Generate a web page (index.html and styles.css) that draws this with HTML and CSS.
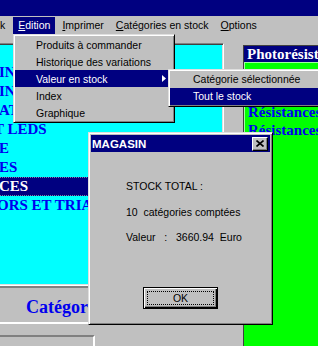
FILE: index.html
```html
<!DOCTYPE html>
<html>
<head>
    <meta charset="utf-8">
    <meta name="viewport" content="width=device-width, initial-scale=1">
    <title>MAGASIN</title>
    <link rel="stylesheet" href="styles.css">
</head>
<body>
    <div class="screen">
        <div class="titlebar"></div>

        <div class="menubar">
            <span class="menu-item first">k</span>
            <span class="menu-item open"><u>E</u>dition</span>
            <span class="menu-item"><u>I</u>mprimer</span>
            <span class="menu-item"><u>C</u>atégories en stock</span>
            <span class="menu-item"><u>O</u>ptions</span>
        </div>

        <div class="workspace">
            <div class="left-col">
                <div class="list-panel">
                    <div class="row">INTERRUPTEURS</div>
                    <div class="row">INVERSEURS</div>
                    <div class="row">ATTENUATEURS</div>
                    <div class="row clip">T LEDS</div>
                    <div class="row">E</div>
                    <div class="row">ES</div>
                    <div class="row selected">CES</div>
                    <div class="row clip-small">ORS ET TRIACS</div>
                </div>
                <div class="caption">Catégories en stock</div>
                <div class="footer-box"></div>
            </div>

            <div class="side-panel">
                <div class="side-head">Photorésistances</div>
                <div class="side-list">
                    <div class="side-row">Potentiomètres</div>
                    <div class="side-row">Relais</div>
                    <div class="side-row">Résistances 1/4 W</div>
                    <div class="side-row">Résistances 1/2 W</div>
                </div>
            </div>
        </div>

        <!-- Edition menu -->
        <div class="dropdown raised">
            <div class="drop-item">Produits à commander</div>
            <div class="drop-item">Historique des variations</div>
            <div class="drop-item active">
                <span>Valeur en stock</span>
                <svg class="arrow" width="4" height="7" viewBox="0 0 4 7"><path d="M0 0 L4 3.5 L0 7 Z" fill="#fff"/></svg>
            </div>
            <div class="drop-item">Index</div>
            <div class="drop-item">Graphique</div>
        </div>

        <div class="submenu raised">
            <div class="sub-item">Catégorie sélectionnée</div>
            <div class="sub-item active">Tout le stock</div>
        </div>

        <!-- result window -->
        <div class="dialog raised">
            <div class="dialog-title">
                <span class="dialog-name">MAGASIN</span>
                <span class="close-btn">
                    <svg width="8" height="7" viewBox="0 0 8 7"><path d="M0.5 0.5 L7.5 6.5 M7.5 0.5 L0.5 6.5" stroke="#000" stroke-width="1.6"/></svg>
                </span>
            </div>
            <div class="dialog-body">
                <div class="line">STOCK TOTAL :</div>
                <div class="line">10  catégories comptées</div>
                <div class="line">Valeur   :   3660.94  Euro</div>
                <div class="ok-btn"><span class="focus">OK</span></div>
            </div>
        </div>
    </div>
</body>
</html>
```

FILE: styles.css
```css
body {
    margin: 0;
    overflow: hidden;
    font-family: "Liberation Sans", Arial, sans-serif;
    font-size: 10.5px;
    color: #000;
    background-color: #c0c0c0;
}

.screen {
    position: relative;
    width: 318px;
    height: 346px;
    overflow: hidden;
    background-color: #c0c0c0;
}

.titlebar {
    height: 16px;
    background-color: #000080;
}

.menubar {
    display: flex;
    gap: 2px;
    padding: 1px 0;
    height: 17px;
    white-space: nowrap;
}

.menu-item {
    padding: 0 5px;
    line-height: 17px;
}

.menu-item.first {
    padding: 0 6px 0 0;
}

.menu-item.open {
    background-color: #000080;
    color: #fff;
}

/* windows behind the menus */
.workspace {
    display: flex;
    padding-top: 8px;
}

.left-col {
    width: 224px;
    flex: none;
}

.list-panel {
    box-sizing: border-box;
    height: 243px;
    margin-left: -2px;
    padding-top: 19px;
    background-color: #00ffff;
    border: 1px solid;
    border-color: #808080 #fff #fff #808080;
    box-shadow: inset 1px 1px #404040, inset -1px -1px #dfdfdf;
    overflow: hidden;
    font-family: "Liberation Serif", "Times New Roman", serif;
    font-weight: bold;
    font-size: 15px;
    color: #0000ee;
}

.row {
    height: 19px;
    line-height: 19px;
    white-space: nowrap;
}

.row.clip {
    margin-left: -5px;
}

.row.clip-small {
    margin-left: -2px;
}

.row.selected {
    box-sizing: border-box;
    background-color: #000080;
    color: #fff;
    border: 1px dotted #8080a0;
    border-left: none;
    line-height: 17px;
}

.caption {
    height: 30px;
    padding: 4px 0 0 26px;
    line-height: 30px;
    border-top: 2px solid #808080;
    border-bottom: 2px solid #fff;
    font-family: "Liberation Serif", "Times New Roman", serif;
    font-weight: bold;
    font-size: 18px;
    color: #0000ee;
    white-space: nowrap;
}

.footer-box {
    width: 93px;
    height: 20px;
    margin-top: 11px;
    border-top: 2px solid #808080;
    border-right: 2px solid #fff;
}

.side-panel {
    flex: 1;
    margin: 2px 0 0 19px;
    height: 320px;
    background-color: #00ff00;
    border-left: 1px solid #404040;
    border-top: 1px solid #404040;
    overflow: hidden;
    white-space: nowrap;
    font-family: "Liberation Serif", "Times New Roman", serif;
    font-weight: bold;
    font-size: 15px;
}

.side-head {
    height: 16px;
    line-height: 16px;
    padding-left: 3px;
    background-color: #000080;
    color: #fff;
}

.side-list {
    padding: 5px 0 0 4px;
    color: #0000ee;
    box-shadow: inset 1px 1px #a0ffa0;
}

.side-row {
    height: 18px;
    line-height: 18px;
}

/* menus and dialog lie over the windows */
.raised {
    box-sizing: border-box;
    background-color: #c0c0c0;
    border: 1px solid;
    border-color: #dfdfdf #000 #000 #dfdfdf;
    box-shadow: inset 1px 1px #fff, inset -1px -1px #808080;
    padding: 1px;
}

.dropdown {
    position: absolute;
    left: 13px;
    top: 34px;
    width: 162px;
}

.drop-item {
    display: flex;
    justify-content: space-between;
    align-items: center;
    height: 17px;
    padding: 0 7px 0 21px;
    white-space: nowrap;
}

.drop-item.active,
.sub-item.active {
    background-color: #000080;
    color: #fff;
}

.arrow {
    display: block;
}

.submenu {
    position: absolute;
    left: 168px;
    top: 69px;
    width: 160px;
}

.sub-item {
    height: 17px;
    line-height: 17px;
    padding-left: 23px;
    white-space: nowrap;
}

.dialog {
    position: absolute;
    left: 88px;
    top: 132px;
    width: 185px;
    height: 193px;
    padding: 2px;
}

.dialog-title {
    display: flex;
    justify-content: space-between;
    align-items: center;
    height: 17px;
    padding: 0 0 0 1px;
    background-color: #000080;
    color: #fff;
}

.dialog-name {
    font-weight: bold;
    font-size: 11.5px;
}

.close-btn {
    box-sizing: border-box;
    display: flex;
    align-items: center;
    justify-content: center;
    width: 16px;
    height: 14px;
    margin-right: 2px;
    background-color: #c0c0c0;
    border: 1px solid;
    border-color: #fff #000 #000 #fff;
    box-shadow: inset -1px -1px #808080;
}

.dialog-body {
    padding: 22px 0 0 35px;
}

.line {
    line-height: 25.5px;
    white-space: pre;
}

.ok-btn {
    box-sizing: border-box;
    width: 75px;
    height: 22px;
    margin: 36px 0 0 17px;
    padding: 3px;
    border: 1px solid #000;
    box-shadow: inset 1px 1px #fff, inset -1px -1px #000, inset -2px -2px #808080;
}

.focus {
    display: block;
    box-sizing: border-box;
    height: 14px;
    line-height: 12px;
    border: 1px dotted #000;
    text-align: center;
}
```
